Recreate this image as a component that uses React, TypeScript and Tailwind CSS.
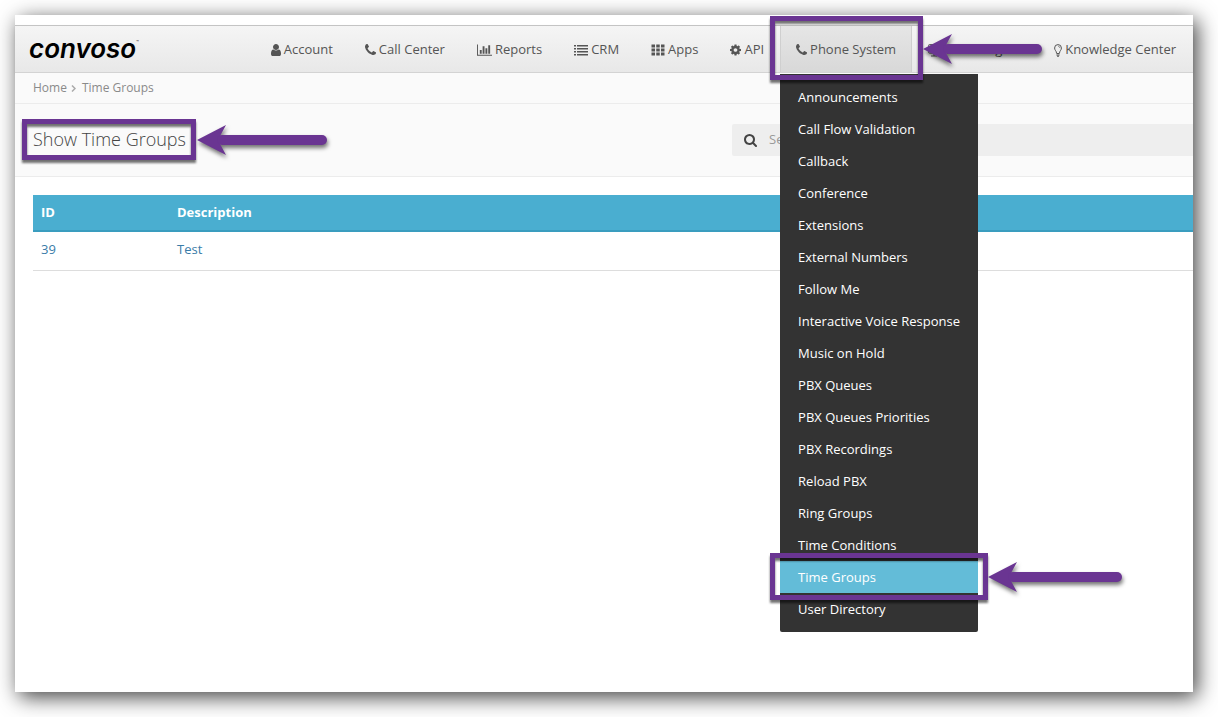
import type { ReactNode } from "react";
import clsx from "clsx";

const glyphs = {
  user: "M1536 1399q0 109-62.5 187t-150.5 78h-854q-88 0-150.5-78t-62.5-187q0-85 8.5-160.5t31.5-152 58.5-131 94-89 134.5-34.5q131 128 313 128t313-128q76 0 134.5 34.5t94 89 58.5 131 31.5 152 8.5 160.5zm-256-887q0 159-112.5 271.5t-271.5 112.5-271.5-112.5-112.5-271.5 112.5-271.5 271.5-112.5 271.5 112.5 112.5 271.5z",
  phone:
    "M1600 1240q0 27-10 70.5t-21 68.5q-21 50-122 106-94 51-186 51-27 0-52.5-3.5t-57.5-12.5-47.5-14.5-55.5-20.5-49-18q-98-35-175-83-128-79-264.5-215.5t-215.5-264.5q-48-77-83-175-3-9-18-49t-20.5-55.5-14.5-47.5-12.5-57.5-3.5-52.5q0-92 51-186 56-101 106-122 25-11 68.5-21t70.5-10q14 0 21 3 18 6 53 76 11 19 30 54t35 63.5 31 53.5q3 4 17.5 25t21.5 35.5 7 28.5q0 20-28.5 50t-62 55-62 53-28.5 46q0 9 5 22.5t8.5 20.5 14 24 11.5 19q76 137 174 235t235 174q2 1 19 11.5t24 14 20.5 8.5 22.5 5q18 0 46-28.5t53-62 55-62 50-28.5q14 0 28.5 7t35.5 21.5 25 17.5q25 15 53.5 31t63.5 35 54 30q70 35 76 53 3 7 3 21z",
  chart:
    "M640 896v512h-256v-512h256zm384-512v1024h-256v-1024h256zm1024 1152v128h-2048v-1536h128v1408h1920zm-640-896v768h-256v-768h256zm384-384v1152h-256v-1152h256z",
  list: "M0 256h256v192h-256zM384 256h1408v192h-1408zM0 640h256v192h-256zM384 640h1408v192h-1408zM0 1024h256v192h-256zM384 1024h1408v192h-1408zM0 1408h256v192h-256zM384 1408h1408v192h-1408z",
  grid: "M64 192h448v384h-448zM672 192h448v384h-448zM1280 192h448v384h-448zM64 704h448v384h-448zM672 704h448v384h-448zM1280 704h448v384h-448zM64 1216h448v384h-448zM672 1216h448v384h-448zM1280 1216h448v384h-448z",
  cog: "M1152 896q0-106-75-181t-181-75-181 75-75 181 75 181 181 75 181-75 75-181zm512-109v222q0 12-8 23t-20 13l-185 28q-19 54-39 91 35 50 107 138 10 12 10 25t-9 23q-27 37-99 108t-94 71q-12 0-26-9l-138-108q-44 23-91 38-16 136-29 186-7 28-36 28h-222q-14 0-24.5-8.5t-11.5-21.5l-28-184q-49-16-90-37l-141 107q-10 9-25 9-14 0-25-11-126-114-165-168-7-10-7-23 0-12 8-23 15-21 51-66.5t54-70.5q-27-50-41-99l-183-27q-13-2-21-12.5t-8-23.5v-222q0-12 8-23t19-13l186-28q14-46 39-92-40-57-107-138-10-12-10-24 0-10 9-23 26-36 98.5-107.5t94.5-71.5q13 0 26 10l138 107q44-23 91-38 16-136 29-186 7-28 36-28h222q14 0 24.5 8.5t11.5 21.5l28 184q49 16 90 37l142-107q9-9 24-9 13 0 25 10 129 119 165 170 7 8 7 22 0 12-8 23-15 21-51 66.5t-54 70.5q26 50 41 98l183 28q13 2 21 12.5t8 23.5z",
  search:
    "M1216 832q0-185-131.5-316.5t-316.5-131.5-316.5 131.5-131.5 316.5 131.5 316.5 316.5 131.5 316.5-131.5 131.5-316.5zm512 832q0 52-38 90t-90 38q-54 0-90-38l-343-342q-179 124-399 124-143 0-273.5-55.5t-225-150-150-225-55.5-273.5 55.5-273.5 150-225 225-150 273.5-55.5 273.5 55.5 225 150 150 225 55.5 273.5q0 220-124 399l343 343q37 37 37 90z",
};

const Glyph = ({ d, box, className }: { d: string; box: string; className: string }) => (
  <svg viewBox={box} fill="currentColor" aria-hidden="true" className={clsx("shrink-0", className)}>
    <path d={d} />
  </svg>
);

const BulbIcon = () => (
  <svg viewBox="0 0 8 13" fill="none" stroke="currentColor" aria-hidden="true" className="h-[13px] w-2 shrink-0">
    <path d="M2.5 9C2.5 7 .6 6.400 .6 4A3.400 3.400 0 0 1 7.400 4C7.400 6.400 5.500 7 5.500 9" />
    <path d="M4.200 2.200Q5.600 2.400 5.700 3.800" strokeWidth=".7" />
    <path d="M2.400 9.500h3.200M2.400 11h3.200M3 12.300h2" strokeWidth="1.100" />
  </svg>
);

const AgentIcon = () => (
  <svg viewBox="0 0 13 13" fill="none" stroke="currentColor" aria-hidden="true" className="size-[13px] shrink-0">
    <rect x=".6" y=".6" width="11" height="8.500" rx=".8" />
    <path d="M3 12h6M6 9v3" />
  </svg>
);

type NavItem = { label: string; icon: ReactNode; active?: boolean };

const navItems: NavItem[] = [
  { label: "Account", icon: <Glyph d={glyphs.user} box="256 0 1280 1792" className="h-3.5 w-2.5" /> },
  { label: "Call Center", icon: <Glyph d={glyphs.phone} box="192 0 1408 1792" className="h-3.5 w-[11px]" /> },
  { label: "Reports", icon: <Glyph d={glyphs.chart} box="0 0 2048 1792" className="h-3.5 w-[15px]" /> },
  { label: "CRM", icon: <Glyph d={glyphs.list} box="0 0 1792 1792" className="size-3.5" /> },
  { label: "Apps", icon: <Glyph d={glyphs.grid} box="0 0 1792 1792" className="size-3.5" /> },
  { label: "API", icon: <Glyph d={glyphs.cog} box="128 0 1536 1792" className="h-3.5 w-[11px]" /> },
  {
    label: "Phone System",
    icon: <Glyph d={glyphs.phone} box="192 0 1408 1792" className="h-3.5 w-[11px]" />,
    active: true,
  },
  { label: "Virtual Agent", icon: <AgentIcon /> },
  { label: "Knowledge Center", icon: <BulbIcon /> },
];

const phoneMenu = [
  "Announcements",
  "Call Flow Validation",
  "Callback",
  "Conference",
  "Extensions",
  "External Numbers",
  "Follow Me",
  "Interactive Voice Response",
  "Music on Hold",
  "PBX Queues",
  "PBX Queues Priorities",
  "PBX Recordings",
  "Reload PBX",
  "Ring Groups",
  "Time Conditions",
  "Time Groups",
  "User Directory",
];

const rows = [{ id: 39, description: "Test" }];

const Highlight = ({ className }: { className: string }) => (
  <span
    className={clsx(
      "pointer-events-none absolute z-20 border-5 border-[#6a3592] drop-shadow-[0_3px_1px_rgba(0,0,0,0.55)]",
      className
    )}
  />
);

const Arrow = ({ length, className }: { length: number; className: string }) => (
  <svg
    width={length}
    height={30}
    fill="#6a3592"
    aria-hidden="true"
    className={clsx(
      "pointer-events-none absolute z-30 overflow-visible drop-shadow-[1px_3px_2px_rgba(0,0,0,0.55)]",
      className
    )}
  >
    <path d="M0 15L29 0L23 11V19L29 30Z" />
    <rect x={20} y={10} width={length - 20} height={10} rx={5} />
  </svg>
);

const PhoneDropdown = () => (
  <ul className="absolute -left-px top-12 z-10 w-[198px] rounded-b-xs bg-[#333] py-[7px]">
    {phoneMenu.map((item) => {
      const selected = item === "Time Groups";
      return (
        <li key={item} className="relative">
          <a
            href="#"
            className={clsx(
              "block px-[18px] text-[13px] leading-8 font-medium whitespace-nowrap text-white",
              selected && "bg-[#63bcd8]"
            )}
          >
            {item}
          </a>
          {selected && (
            <>
              <Highlight className="-inset-x-2.5 -top-2 -bottom-[7px]" />
              <Arrow length={134} className="top-px left-full ml-2.5" />
            </>
          )}
        </li>
      );
    })}
  </ul>
);

const Header = () => (
  <header className="flex h-12 items-stretch border-y border-t-[#c4c4c4] border-b-[#d3d3d3] bg-linear-to-b from-[#f5f5f5] to-[#e8e8e8] pr-px shadow-[0_1px_2px_rgba(0,0,0,0.06)]">
    <a
      href="#"
      className="flex items-center pl-3.5 font-['Inter',sans-serif] text-[26px] leading-none font-semibold text-black italic"
    >
      convoso
      <span className="mb-3 text-[4px] not-italic">™</span>
    </a>
    <nav className="ml-auto">
      <ul className="flex h-full">
        {navItems.map(({ label, icon, active }) => (
          <li
            key={label}
            className={clsx(
              "relative",
              active && "border-x border-[#cfcfcf] bg-linear-to-b from-[#e6e6e6] to-[#d8d8d8]"
            )}
          >
            <a
              href="#"
              className={clsx(
                "flex h-full items-center gap-[3px] pt-0.5 text-[13px] whitespace-nowrap text-[#555]",
                active ? "px-[15px]" : "px-4"
              )}
            >
              {icon}
              {label}
            </a>
            {active && (
              <>
                <PhoneDropdown />
                <Highlight className="-top-2.5 -right-3 -bottom-2 -left-[11px]" />
                <Arrow length={119} className="top-2 left-full ml-3" />
              </>
            )}
          </li>
        ))}
      </ul>
    </nav>
  </header>
);

export default function App() {
  return (
    <div className="min-h-screen bg-white pt-[15px] pr-[25px] pb-[25px] pl-[15px] font-['Open_Sans','Noto_Sans',sans-serif] text-[13px] text-[#555]">
      <div className="min-h-[calc(100vh-40px)] bg-white pt-2.5 shadow-[4px_5px_20px_rgba(0,0,0,0.75)]">
        <Header />

        <nav aria-label="Breadcrumb" className="border-b border-[#ececec] bg-[#fafafa]">
          <ol className="flex h-[30px] items-center px-[18px] text-[12px] text-[#8a8a8a]">
            <li>
              <a href="#">Home</a>
            </li>
            <li aria-hidden="true" className="px-1">
              <svg viewBox="0 0 5 7" fill="none" stroke="#aaa" strokeWidth="1.500" className="h-[7px] w-[5px]">
                <path d="M1 .5L4 3.500L1 6.500" />
              </svg>
            </li>
            <li className="pl-0.5">
              <a href="#">Time Groups</a>
            </li>
          </ol>
        </nav>

        <div className="flex h-[73px] items-center justify-between border-b border-[#ececec] bg-[#fafafa] pl-[18px]">
          <h1 className="relative pb-0.5 text-[18px] leading-6 font-light whitespace-nowrap text-[#444]">
            Show Time Groups
            <Highlight className="-top-2 -right-2.5 -bottom-[7px] -left-[11px]" />
            <Arrow length={130} className="-top-0.5 left-full ml-[11px]" />
          </h1>
          <label className="flex h-8 w-[461px] items-center gap-3 rounded-l-xs bg-[#eee] pl-3 text-[#444]">
            <Glyph d={glyphs.search} box="64 128 1664 1664" className="size-[13px]" />
            <input
              type="search"
              aria-label="Search"
              placeholder="Search..."
              className="min-w-0 flex-1 bg-transparent outline-none placeholder:text-[#999]"
            />
          </label>
        </div>

        <div className="pt-[18px] pl-[18px]">
          <table className="w-full table-fixed text-left leading-[18px]">
            <thead>
              <tr className="border-b-2 border-[#3a9dbf] bg-[#4aaed0] text-white">
                <th className="w-[136px] px-2 pt-2 pb-[9px] font-bold">ID</th>
                <th className="px-2 pt-2 pb-[9px] font-bold">Description</th>
              </tr>
            </thead>
            <tbody>
              {rows.map((row) => (
                <tr key={row.id} className="h-[39px] border-b border-[#ddd] align-top text-[#3a7ca8]">
                  <td className="px-2 pt-2">
                    <a href="#">{row.id}</a>
                  </td>
                  <td className="px-2 pt-2">
                    <a href="#">{row.description}</a>
                  </td>
                </tr>
              ))}
            </tbody>
          </table>
        </div>
      </div>
    </div>
  );
}
